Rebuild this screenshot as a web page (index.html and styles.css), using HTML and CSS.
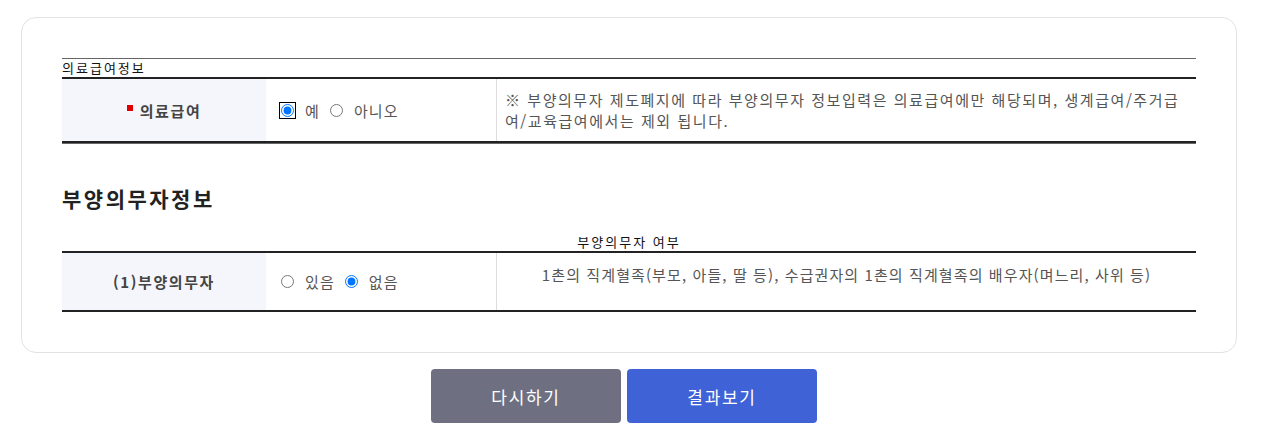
FILE: index.html
```html
<!DOCTYPE html>
<html lang="ko">
<head>
<meta charset="utf-8">
<title>부양의무자정보</title>
<link rel="stylesheet" href="styles.css">
</head>
<body>
<div class="page">
  <section class="card">
    <div class="table first">
      <div class="caption left">의료급여정보</div>
      <div class="row tall">
        <div class="th"><span class="req"></span>의료급여</div>
        <div class="td radios">
          <input type="radio" name="med" class="focused" checked><span class="lbl">예</span>
          <input type="radio" name="med"><span class="lbl">아니오</span>
        </div>
        <div class="td note">※ 부양의무자 제도폐지에 따라 부양의무자 정보입력은 의료급여에만 해당되며, 생계급여/주거급여/교육급여에서는 제외 됩니다.</div>
      </div>
    </div>

    <h2 class="title">부양의무자정보</h2>

    <div class="table second">
      <div class="caption center">부양의무자 여부</div>
      <div class="row short">
        <div class="th">(1)부양의무자</div>
        <div class="td radios">
          <input type="radio" name="dep"><span class="lbl">있음</span>
          <input type="radio" name="dep" checked><span class="lbl">없음</span>
        </div>
        <div class="td desc">1촌의 직계혈족(부모, 아들, 딸 등), 수급권자의 1촌의 직계혈족의 배우자(며느리, 사위 등)</div>
      </div>
    </div>
  </section>

  <div class="buttons">
    <button class="btn reset" type="button">다시하기</button>
    <button class="btn submit" type="button">결과보기</button>
  </div>
</div>
</body>
</html>
```

FILE: styles.css
```css
* { box-sizing: border-box; }
html, body { margin: 0; padding: 0; background: #fff; }
body {
  font-family: "Noto Sans CJK KR", "Noto Sans", sans-serif;
  color: #333;
}
.page {
  width: 1216px;
  margin-left: 21px;
  padding-top: 17px;
}
.card {
  border: 1px solid #e2e2e2;
  border-radius: 15px;
  padding: 40px;
}
.table.first {
  border-top: 1px solid #666;
  border-bottom: 1px solid #666;
}
.caption {
  font-size: 13px;
  letter-spacing: 2px;
  line-height: 18px;
  height: 20px;
  color: #111;
  border-bottom: 2px solid #222;
}
.caption.left { text-align: left; }
.caption.center { text-align: center; }
.row {
  display: grid;
  grid-template-columns: 204px 230px 1fr;
  border-bottom: 2px solid #222;
}
.row.tall { min-height: 64px; }
.row.short { min-height: 59px; }
.th {
  background: #f5f6fb;
  font-weight: 700;
  font-size: 15px;
  letter-spacing: 1.6px;
  color: #444;
  display: flex;
  align-items: center;
  justify-content: center;
}
.req {
  display: inline-block;
  width: 6px;
  height: 6px;
  background: #e00000;
  margin-right: 7px;
  position: relative;
  top: -2px;
}
.td {
  font-size: 15px;
  letter-spacing: 1.1px;
  color: #555;
}
.radios {
  display: flex;
  align-items: center;
  padding-left: 15px;
}
.radios input {
  margin: 0;
  width: 13px;
  height: 13px;
}
.radios input.focused {
  outline: 1px solid #000;
  outline-offset: 1px;
}
.lbl {
  margin-left: 11px;
  margin-right: 10px;
  line-height: 21px;
}
.note {
  border-left: 1px solid #dcdcdc;
  padding: 10px 10px 10px 8px;
  line-height: 21px;
  letter-spacing: 1.55px;
  display: flex;
  align-items: center;
}
.desc {
  border-left: 1px solid #dcdcdc;
  padding: 11px 10px;
  line-height: 21px;
  text-align: center;
}
.title {
  font-size: 21px;
  letter-spacing: 2.5px;
  line-height: 28px;
  font-weight: 700;
  color: #222;
  margin: 40px 0 21px 0;
}
.buttons {
  display: flex;
  justify-content: center;
  gap: 6px;
  padding-right: 10px;
  margin-top: 16px;
}
.btn {
  width: 190px;
  height: 54px;
  border: 0;
  border-radius: 4px;
  color: #fff;
  font-family: "Noto Sans CJK KR", "Noto Sans", sans-serif;
  font-size: 17px;
  letter-spacing: 1.7px;
}
.btn.reset { background: #6e7082; }
.btn.submit { background: #3f62d7; }
```
